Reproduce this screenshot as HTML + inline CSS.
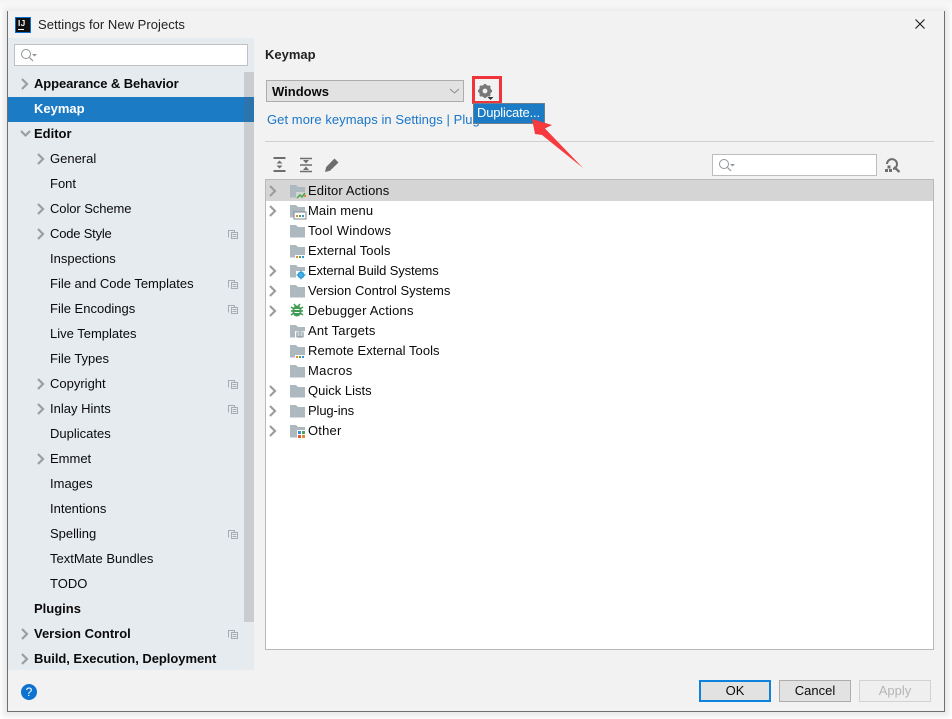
<!DOCTYPE html>
<html><head><meta charset="utf-8">
<style>
html,body{margin:0;padding:0;width:952px;height:719px;overflow:hidden;background:#fff;font-family:"Liberation Sans","Noto Sans CJK SC",sans-serif;font-size:13px;color:#0a0a0a}
.a{position:absolute}
.t{position:absolute;white-space:nowrap;line-height:16px;font-size:13px}
.b{font-weight:bold}
svg{position:absolute;overflow:visible}
</style></head><body>
<div class="a" style="left:0;top:0;width:952px;height:719px;background:linear-gradient(#f4f4f4,#fff 12px)"></div>
<div class="a" style="left:3px;top:8px;width:946px;height:708px;background:#e9e9e9;filter:blur(3px)"></div>
<div class="a" style="left:7px;top:11px;width:938px;height:701px;background:#f2f2f2;border-left:1px solid #6f6f6f;border-right:1px solid #6f6f6f;border-bottom:1px solid #6f6f6f;box-sizing:border-box"></div>

<!-- title -->
<div class="a" style="left:15px;top:17px;width:16px;height:16px;background:#111;border:1px solid #0a6fd0;box-sizing:border-box"></div>
<div class="t b" style="left:18px;top:19px;color:#fff;font-size:8px;line-height:10px;letter-spacing:.5px">IJ</div>
<div class="a" style="left:18px;top:29px;width:6px;height:1px;background:#fff"></div>
<div class="t" style="left:38px;top:17px;color:#222;letter-spacing:.04px">Settings for New Projects</div>
<svg style="left:914px;top:18px" width="12" height="12"><path d="M1.500 1.500L10.500 10.500M10.500 1.500L1.500 10.500" stroke="#222" stroke-width="1.200"/></svg>

<!-- sidebar -->
<div class="a" style="left:8px;top:38px;width:246px;height:632px;background:#e6ebf0"></div>
<div class="a" style="left:244px;top:72px;width:10px;height:550px;background:#c9cdd1"></div>
<div class="a" style="left:14px;top:44px;width:234px;height:22px;background:#fff;border:1px solid #bfc3c7;box-sizing:border-box"></div>
<svg style="left:20px;top:48px" width="18" height="14"><circle cx="6" cy="6" r="4.500" fill="none" stroke="#8f9498" stroke-width="1"/><path d="M9.500 9.500L13 13" stroke="#8f9498" stroke-width="1.200"/><path d="M12 6h5l-2.500 2.500z" fill="#8f9498"/></svg>
<div class="a" style="left:8px;top:97px;width:246px;height:25px;background:#1b7bc4"></div>
<div class="a" style="left:244px;top:97px;width:10px;height:25px;background:#2b74ad"></div>

<div class="t b" style="left:34px;top:76px;letter-spacing:-.1px">Appearance &amp; Behavior</div>
<div class="t b" style="left:34px;top:101px;color:#fff">Keymap</div>
<div class="t b" style="left:34px;top:126px">Editor</div>
<div class="t" style="left:50px;top:151px">General</div>
<div class="t" style="left:50px;top:176px">Font</div>
<div class="t" style="left:50px;top:201px;letter-spacing:-.08px">Color Scheme</div>
<div class="t" style="left:50px;top:226px;letter-spacing:-.2px">Code Style</div>
<div class="t" style="left:50px;top:251px">Inspections</div>
<div class="t" style="left:50px;top:276px">File and Code Templates</div>
<div class="t" style="left:50px;top:301px">File Encodings</div>
<div class="t" style="left:50px;top:326px">Live Templates</div>
<div class="t" style="left:50px;top:351px">File Types</div>
<div class="t" style="left:50px;top:376px">Copyright</div>
<div class="t" style="left:50px;top:401px">Inlay Hints</div>
<div class="t" style="left:50px;top:426px">Duplicates</div>
<div class="t" style="left:50px;top:451px">Emmet</div>
<div class="t" style="left:50px;top:476px">Images</div>
<div class="t" style="left:50px;top:501px">Intentions</div>
<div class="t" style="left:50px;top:526px">Spelling</div>
<div class="t" style="left:50px;top:551px">TextMate Bundles</div>
<div class="t" style="left:50px;top:576px">TODO</div>
<div class="t b" style="left:34px;top:601px">Plugins</div>
<div class="t b" style="left:34px;top:626px">Version Control</div>
<div class="t b" style="left:34px;top:651px;letter-spacing:-.04px">Build, Execution, Deployment</div>

<svg style="left:0;top:0" width="952" height="719" fill="none" stroke="#9a9ea2" stroke-width="2.200">
<path d="M22 79l5 5-5 5M22 629l5 5-5 5M22 654l5 5-5 5"/>
<path d="M21 131l4.500 4.500 4.500-4.500"/>
<path d="M38 154l5 5-5 5M38 204l5 5-5 5M38 229l5 5-5 5M38 379l5 5-5 5M38 404l5 5-5 5M38 454l5 5-5 5"/>
</svg>
<svg style="left:0;top:0" width="952" height="719" fill="none" stroke="#a4adb4" stroke-width="1">
<path d="M228.500 237.500v-7h6v2M231.500 232.500h6v6h-6zM232.500 234.500h4M232.500 236.500h4"/>
<path d="M228.500 287.500v-7h6v2M231.500 282.500h6v6h-6zM232.500 284.500h4M232.500 286.500h4"/>
<path d="M228.500 312.500v-7h6v2M231.500 307.500h6v6h-6zM232.500 309.500h4M232.500 311.500h4"/>
<path d="M228.500 387.500v-7h6v2M231.500 382.500h6v6h-6zM232.500 384.500h4M232.500 386.500h4"/>
<path d="M228.500 412.500v-7h6v2M231.500 407.500h6v6h-6zM232.500 409.500h4M232.500 411.500h4"/>
<path d="M228.500 537.500v-7h6v2M231.500 532.500h6v6h-6zM232.500 534.500h4M232.500 536.500h4"/>
<path d="M228.500 637.500v-7h6v2M231.500 632.500h6v6h-6zM232.500 634.500h4M232.500 636.500h4"/>
</svg>

<!-- help -->
<div class="a" style="left:21px;top:684px;width:16px;height:16px;border-radius:50%;background:#0d72d0;color:#fff;text-align:center;line-height:16px;font-size:12px">?</div>

<!-- right header -->
<div class="t b" style="left:265px;top:47px;color:#222">Keymap</div>
<div class="a" style="left:266px;top:80px;width:198px;height:22px;background:#e2e2e2;border:1px solid #adadad;box-sizing:border-box"></div>
<div class="t b" style="left:272px;top:84px">Windows</div>
<svg style="left:449px;top:88px" width="11" height="7"><path d="M1 1l4.500 4 4.500-4" fill="none" stroke="#8a8a8a" stroke-width="1"/></svg>

<div class="t" style="left:267px;top:112px;color:#1a76c8;letter-spacing:.06px">Get more keymaps in Settings | Plug</div>
<div class="a" style="left:265px;top:141px;width:669px;height:1px;background:#d0d0d0"></div>

<!-- gear -->
<svg style="left:477px;top:83px" width="18" height="18">
<circle cx="8" cy="8" r="4.600" fill="none" stroke="#787878" stroke-width="3"/>
<path d="M8 1v14M1 8h14M3 3l10 10M13 3L3 13" stroke="#787878" stroke-width="2.400"/>
<circle cx="8" cy="8" r="2.400" fill="#f2f2f2"/>
<path d="M10.500 14h6l-3 3z" fill="#333"/>
</svg>
<div class="a" style="left:472px;top:76px;width:30px;height:28px;border:3px solid #f0343c;box-sizing:border-box"></div>

<!-- popup -->
<div class="a" style="left:473px;top:103px;width:72px;height:21px;background:#1b7bc4;border:1px solid #6f7f8c;box-sizing:border-box"></div>
<div class="t" style="left:477px;top:105px;color:#fff;letter-spacing:-.18px">Duplicate...</div>

<!-- toolbar -->
<svg style="left:272px;top:157px" width="70" height="16">
<path d="M1.500 1h12M1.500 14h12" stroke="#6e6e6e" stroke-width="2"/>
<path d="M7.500 3.500l3 3h-6zM7.500 11.500l3-3h-6z" fill="#6e6e6e"/>
<path d="M28 1.500h12M28 14.500h12M28 8h12" stroke="#6e6e6e" stroke-width="1.600"/>
<path d="M34 6.500l-3-3.500h6zM34 9.500l3 3.500h-6z" fill="#6e6e6e"/>
<path d="M53 15l1.200-5 8.300-8.500 4 4-8.500 8.300z" fill="#6e6e6e"/>
</svg>

<!-- search -->
<div class="a" style="left:712px;top:154px;width:165px;height:22px;background:#fff;border:1px solid #bdbdbd;box-sizing:border-box"></div>
<svg style="left:718px;top:158px" width="18" height="14"><circle cx="6" cy="6" r="4.500" fill="none" stroke="#8f9498"/><path d="M9.500 9.500L13 13" stroke="#8f9498" stroke-width="1.200"/><path d="M12 6h5l-2.500 2.500z" fill="#8f9498"/></svg>
<svg style="left:884px;top:157px" width="18" height="16">
<path d="M3 7a5 5 0 1 1 6 5" fill="none" stroke="#6e6e6e" stroke-width="2"/>
<path d="M10 10l5.500 5" stroke="#6e6e6e" stroke-width="2.200"/>
<path d="M1 12h3v3H1zM5 12h3v3H5zM3.500 8.500h3v3h-3z" fill="#6e6e6e"/>
</svg>

<!-- tree -->
<div class="a" style="left:265px;top:179px;width:669px;height:471px;background:#fff;border:1px solid #b9b9b9;box-sizing:border-box"></div>
<div class="a" style="left:266px;top:180px;width:667px;height:21px;background:#d5d5d5"></div>

<div class="t" style="left:308px;top:183px;letter-spacing:.14px">Editor Actions</div>
<div class="t" style="left:308px;top:203px;letter-spacing:.1px">Main menu</div>
<div class="t" style="left:308px;top:223px;letter-spacing:.25px">Tool Windows</div>
<div class="t" style="left:308px;top:243px;letter-spacing:.07px">External Tools</div>
<div class="t" style="left:308px;top:263px;letter-spacing:-.14px">External Build Systems</div>
<div class="t" style="left:308px;top:283px">Version Control Systems</div>
<div class="t" style="left:308px;top:303px;letter-spacing:.19px">Debugger Actions</div>
<div class="t" style="left:308px;top:323px;letter-spacing:.18px">Ant Targets</div>
<div class="t" style="left:308px;top:343px;letter-spacing:.05px">Remote External Tools</div>
<div class="t" style="left:308px;top:363px;letter-spacing:.33px">Macros</div>
<div class="t" style="left:308px;top:383px">Quick Lists</div>
<div class="t" style="left:308px;top:403px;letter-spacing:-.12px">Plug-ins</div>
<div class="t" style="left:308px;top:423px;letter-spacing:.2px">Other</div>

<svg style="left:0;top:0" width="952" height="719" fill="none" stroke="#9a9ea2" stroke-width="2.200">
<path d="M270 186l5 5-5 5M270 206l5 5-5 5M270 266l5 5-5 5M270 286l5 5-5 5M270 306l5 5-5 5M270 386l5 5-5 5M270 406l5 5-5 5M270 426l5 5-5 5"/>
</svg>
<svg style="left:0;top:0" width="952" height="719" fill="#adb8bf">
<path d="M290 185h6l2 2h7v10.500h-15z"/>
<path d="M290 205h6l2 2h7v10.500h-15z"/>
<path d="M290 225h6l2 2h7v10.500h-15z"/>
<path d="M290 245h6l2 2h7v10.500h-15z"/>
<path d="M290 265h6l2 2h7v10.500h-15z"/>
<path d="M290 285h6l2 2h7v10.500h-15z"/>
<path d="M290 325h6l2 2h7v10.500h-15z"/>
<path d="M290 345h6l2 2h7v10.500h-15z"/>
<path d="M290 365h6l2 2h7v10.500h-15z"/>
<path d="M290 385h6l2 2h7v10.500h-15z"/>
<path d="M290 405h6l2 2h7v10.500h-15z"/>
<path d="M290 425h6l2 2h7v10.500h-15z"/>
<!-- editor actions overlay -->
<rect x="296" y="192" width="10" height="8" fill="#d5d5d5"/>
<path d="M297 198l3-3 2 2 3-4" fill="none" stroke="#4aa54a" stroke-width="1.500"/>
<rect x="304" y="195" width="2" height="2" fill="#e0893a"/>
<!-- main menu overlay -->
<rect x="294" y="212" width="12" height="7" fill="#fff" stroke="#7f8a91"/>
<rect x="296" y="215" width="2" height="2" fill="#e0893a"/><rect x="299" y="215" width="2" height="2" fill="#4aa54a"/><rect x="302" y="215" width="2" height="2" fill="#3a8fd8"/>
<!-- external tools overlay -->
<rect x="295" y="255" width="11" height="4" fill="#fff"/>
<rect x="296" y="256" width="2" height="2" fill="#e0893a"/><rect x="299" y="256" width="2" height="2" fill="#4aa54a"/><rect x="302" y="256" width="2" height="2" fill="#3a8fd8"/>
<!-- build overlay -->
<rect x="296" y="271" width="10" height="8" fill="#fff"/>
<circle cx="301" cy="275" r="2.500" fill="none" stroke="#2f9fd8" stroke-width="2"/>
<path d="M301 270.500v9M296.500 275h9" stroke="#2f9fd8" stroke-width="1.200"/>
<!-- ant overlay -->
<rect x="295" y="331" width="11" height="8" fill="#fff"/>
<path d="M297 332h6v5h-6zM296 334h8M296 336h8M300 331v7" fill="none" stroke="#9aa5ac"/>
<!-- remote overlay -->
<rect x="295" y="355" width="11" height="4" fill="#fff"/>
<rect x="296" y="356" width="2" height="2" fill="#e0893a"/><rect x="299" y="356" width="2" height="2" fill="#4aa54a"/><rect x="302" y="356" width="2" height="2" fill="#3a8fd8"/>
<!-- other overlay -->
<rect x="297" y="430" width="10" height="10" fill="#fff"/>
<rect x="298" y="431" width="3" height="3" fill="#3a8fd8"/><rect x="302" y="431" width="3" height="3" fill="#4aa54a"/><rect x="298" y="435" width="3" height="3" fill="#e05a3a"/><rect x="302" y="435" width="3" height="3" fill="#e0893a"/>
<!-- bug -->
<ellipse cx="297" cy="311" rx="4.500" ry="5.500" fill="#3f9c52"/>
<path d="M291 307l3 2M303 307l-3 2M291 311h12M291 315l3-2M303 315l-3-2M294 304l1.500 2M300 304l-1.500 2" stroke="#3f9c52" stroke-width="1.500" fill="none"/>
<path d="M294.500 309.500h5M294.500 312.500h5" stroke="#fff" stroke-width="1"/>
</svg>

<!-- buttons -->
<div class="a" style="left:699px;top:680px;width:72px;height:22px;background:#e2e2e2;border:2px solid #0f82dc;box-sizing:border-box;text-align:center;line-height:18px">OK</div>
<div class="a" style="left:779px;top:680px;width:72px;height:22px;background:#e2e2e2;border:1px solid #adadad;box-sizing:border-box;text-align:center;line-height:20px">Cancel</div>
<div class="a" style="left:859px;top:680px;width:72px;height:22px;background:#efefef;border:1px solid #d2d2d2;box-sizing:border-box;text-align:center;line-height:20px;color:#b5b5b5">Apply</div>

<!-- red arrow -->
<svg style="left:0;top:0" width="952" height="719"><path d="M532 119L552 125L545 128.500L583 168L542 135L535 134z" fill="#f63a3d"/></svg>
</body></html>
